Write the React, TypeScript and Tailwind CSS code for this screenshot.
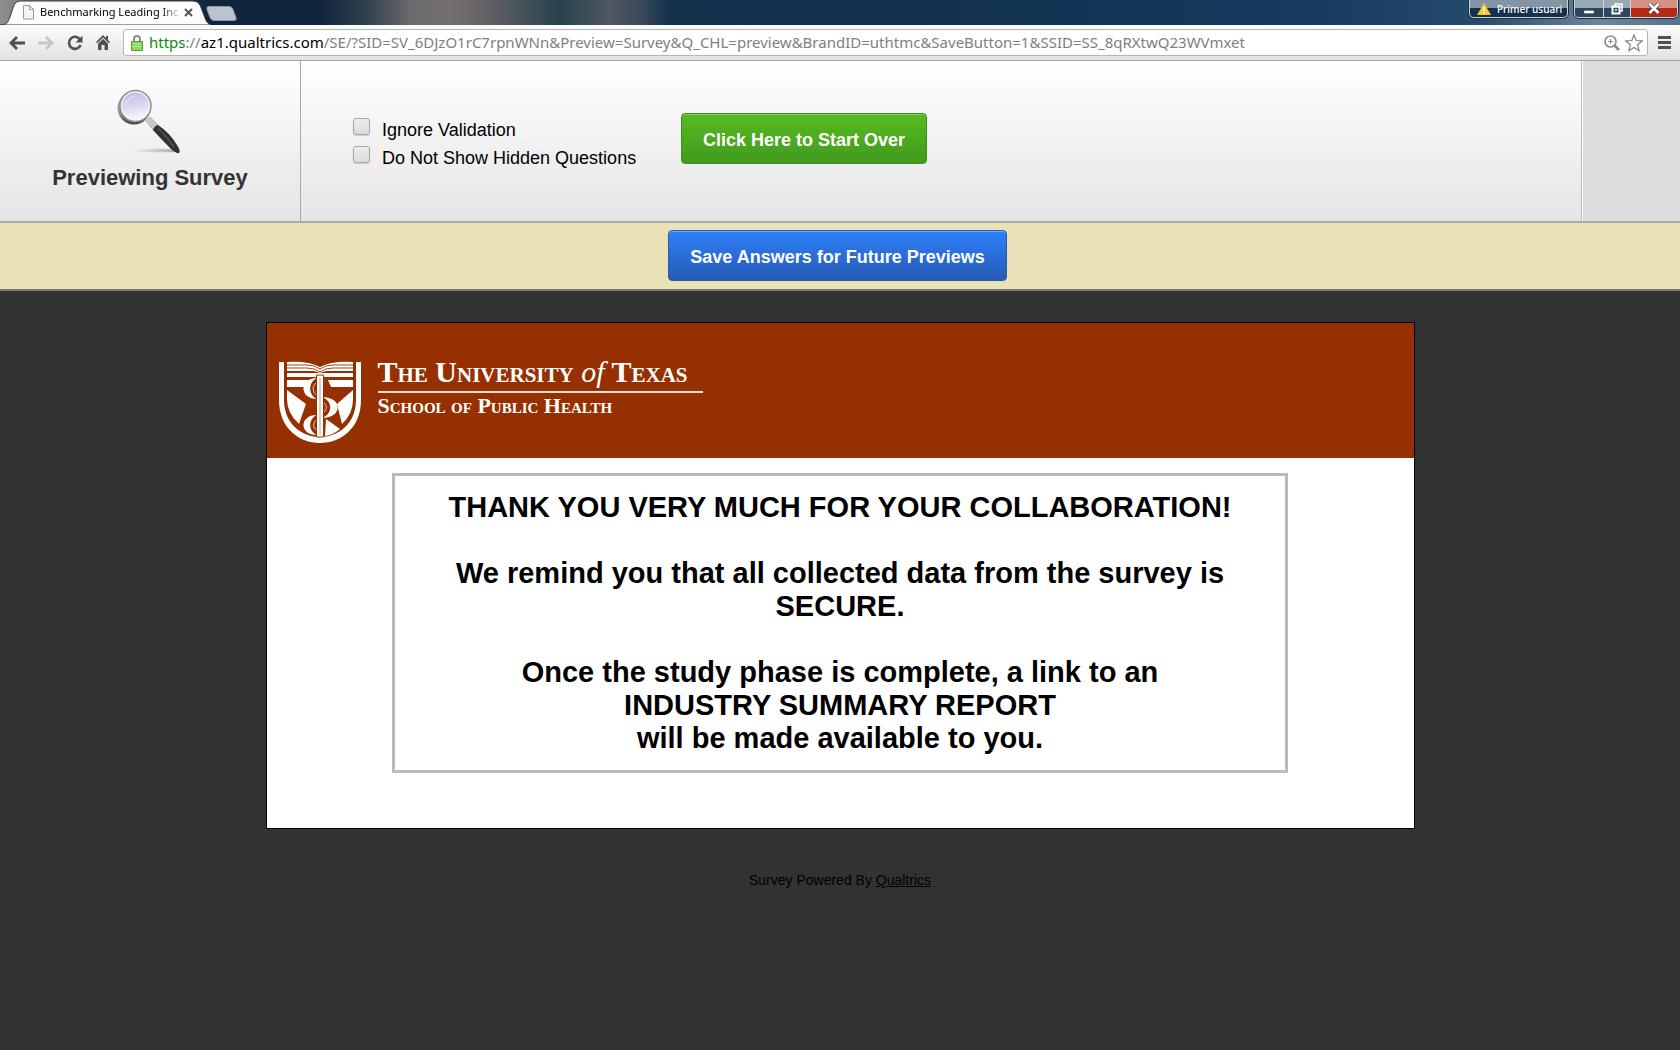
import React from "react";

const legacyButton =
  "h-[51px] rounded-[4px] border px-[21px] pt-[3px] font-['Liberation_Sans',sans-serif] text-[18px] font-bold text-white";

function TitleBar() {
  return (
    <div className="flex h-[25px] items-start justify-between bg-[linear-gradient(90deg,#8f8d90_0px,#777_30px,#10243c_210px,#10243c_320px,#34434f_370px,#6b6a6d_410px,#75706f_450px,#625f66_490px,#25434c_560px,#505762_610px,#3c4a5a_640px,#12304a_670px,#12304e_900px,#153a5e_1300px,#244a6c_1480px,#6d8699_1600px,#54728a_1680px)]">
      <div className="flex items-start">
        <div className="relative h-[25px] w-[211px]">
          <svg className="absolute inset-0" width="211" height="25" viewBox="0 0 211 25" aria-hidden="true">
            <path d="M0 25 C7 25 8 22 10 17 L14 5 Q16 1 20 1 H193 Q198 1 200 5 L205 18 Q207 25 213 25Z" fill="#fcfcfc" stroke="#33404d" strokeWidth="1" />
          </svg>
          <div className="relative flex h-[25px] items-center pl-[22px]">
            <svg width="13" height="15" viewBox="0 0 13 15" aria-hidden="true">
              <path d="M1.500 .5h6l4 4v9.500h-10zM7.500 .5v4h4" fill="#f4f4f4" stroke="#999" />
            </svg>
            <span className="ml-[5px] w-[138px] bg-gradient-to-r from-black from-85% to-[#ccc] bg-clip-text whitespace-nowrap font-['Noto_Sans',sans-serif] text-[11px] text-transparent">
              Benchmarking Leading Inc
            </span>
            <button aria-label="Close tab" className="ml-[6px]">
              <svg width="9" height="9" viewBox="0 0 9 9"><path d="M1 1l7 7M8 1l-7 7" stroke="#555" strokeWidth="2" /></svg>
            </button>
          </div>
        </div>
        <button aria-label="New tab" className="mt-[6px] -ml-[6px]">
          <svg width="32" height="15" viewBox="0 0 32 15"><path d="M4 .5h20q3 0 4 3l3 8q1 3-2 3H9q-3 0-4-3l-3-8q-1-3 2-3z" fill="#bac4ce" stroke="#8b98a5" /></svg>
        </button>
      </div>
      <div className="flex gap-[6px] pr-[2px] font-['Noto_Sans',sans-serif]">
        <button className="flex h-[18px] w-[99px] items-center gap-[6px] rounded-b-[5px] border border-t-0 border-[#c9d3dc] bg-gradient-to-b from-[#8395a5] from-45% to-[#15304a] to-50% pl-[7px] text-[10px] leading-[16px] font-medium whitespace-nowrap text-white shadow-[0_0_0_1px_#1b2f42]">
          <svg className="shrink-0" width="14" height="12" viewBox="0 0 14 12" aria-hidden="true"><path d="M7 0l7 12H0z" fill="#fcc62d" /><path d="M7 4v4M7 9v1.500" stroke="#fff" strokeWidth="1.500" /></svg>
          Primer usuari
        </button>
        <div className="flex h-[18px] overflow-hidden rounded-b-[5px] border border-t-0 border-[#c9d3dc] shadow-[0_0_0_1px_#1b2f42]">
          <button aria-label="Minimize" className="flex w-[29px] items-center justify-center border-r border-[#c9d3dc] bg-gradient-to-b from-[#98a8b5] from-45% to-[#2c465f] to-50%">
            <svg width="12" height="12" viewBox="0 0 12 12"><path d="M1 7.500h10v3H1z" fill="#fff" stroke="#555" strokeWidth=".5" /></svg>
          </button>
          <button aria-label="Restore" className="flex w-[27px] items-center justify-center border-r border-[#c9d3dc] bg-gradient-to-b from-[#98a8b5] from-45% to-[#2c465f] to-50%">
            <svg width="12" height="12" viewBox="0 0 12 12" fill="none" stroke="#fff" strokeWidth="1.500"><path d="M4 3V1h7v7H9" /><path d="M1.500 3.500h7v7h-7z" strokeWidth="2" /><path d="M4.500 6.500h1v1h-1z" strokeWidth="1" /></svg>
          </button>
          <button aria-label="Close" className="flex w-[46px] items-center justify-center bg-gradient-to-b from-[#d69084] from-45% to-[#b42a15] to-50%">
            <svg width="12" height="11" viewBox="0 0 12 11"><path d="M1.500 1l9 9M10.500 1l-9 9" stroke="#444" strokeWidth="4" /><path d="M1.500 1l9 9M10.500 1l-9 9" stroke="#fff" strokeWidth="2.500" /></svg>
          </button>
        </div>
      </div>
    </div>
  );
}

function NavBar() {
  return (
    <div className="flex h-[36px] items-center border-b border-[#a6a6a6] bg-gradient-to-b from-[#fcfcfc] to-[#e2e2e2] pr-[9px] pl-[9px]">
      <div className="flex w-[114px] items-center gap-[13px]">
        <button aria-label="Back"><svg width="16" height="14" viewBox="0 0 16 14"><path d="M8 1L2 7l6 6M2 7h14" fill="none" stroke="#505050" strokeWidth="2.800" /></svg></button>
        <button aria-label="Forward"><svg width="16" height="14" viewBox="0 0 16 14"><path d="M8 1l6 6-6 6M14 7H0" fill="none" stroke="#c6c6c6" strokeWidth="2.800" /></svg></button>
        <button aria-label="Reload"><svg width="16" height="16" viewBox="0 0 16 16"><path d="M13 4.500A6 6 0 1 0 13.600 10" fill="none" stroke="#505050" strokeWidth="2.600" /><path d="M15.500 .5v7h-7z" fill="#505050" /></svg></button>
        <button aria-label="Home"><svg width="14" height="15" viewBox="0 0 14 15"><path d="M7 0l7 7-1.200 1.200L7 2.500 1.200 8.200 0 7zM10 1h2v4l-2-2zM2 8.800l5-5 5 5V15H8.500v-5h-3v5H2z" fill="#505050" /></svg></button>
      </div>
      <div className="flex h-[27px] min-w-0 flex-1 items-center rounded-[3px] border border-[#b5b5b5] bg-white pr-[4px] pl-[7px]">
        <svg className="shrink-0" width="12" height="16" viewBox="0 0 12 16" aria-hidden="true">
          <path d="M3 8V4q0-3 3-3t3 3v4" fill="none" stroke="#8c8c8c" strokeWidth="2" />
          <path d="M.5 6.500h11v9H.5z" fill="#8cd65c" stroke="#5c9a3b" />
          <path d="M2 9h8M2 11.500h8" stroke="#b4ea90" />
        </svg>
        <div className="ml-[6px] min-w-0 flex-1 overflow-hidden whitespace-nowrap font-['Noto_Sans',sans-serif] text-[15px] text-[#808080]">
          <span className="text-[#0a8a0a]">https</span>://<span className="text-black">az1.qualtrics.com</span>
          /SE/?SID=SV_6DJzO1rC7rpnWNn&amp;Preview=Survey&amp;Q_CHL=preview&amp;BrandID=uthtmc&amp;SaveButton=1&amp;SSID=SS_8qRXtwQ23WVmxet
        </div>
        <button aria-label="Zoom"><svg width="16" height="16" viewBox="0 0 16 16" fill="none" stroke="#8a8a8a"><circle cx="6.500" cy="6.500" r="5.500" strokeWidth="1.600" /><path d="M4 6.500h5M6.500 4v5" /><path d="M10.500 10.500l4.500 4.500" strokeWidth="2.600" /></svg></button>
        <button aria-label="Bookmark" className="ml-[5px]"><svg width="18" height="18" viewBox="0 0 18 18"><path d="M9 1l2.200 5.500 6 .4-4.600 3.900 1.500 5.900L9 13.500l-5.100 3.200 1.500-5.900L.8 6.900l6-.4z" fill="#fff" stroke="#808080" strokeWidth="1.200" /></svg></button>
      </div>
      <button aria-label="Menu" className="ml-[10px]"><svg width="13" height="13" viewBox="0 0 13 13"><path d="M0 1.500h13M0 6.500h13M0 11.500h13" stroke="#505050" strokeWidth="3" /></svg></button>
    </div>
  );
}

function Magnifier() {
  return (
    <svg width="66" height="66" viewBox="0 0 66 66" aria-hidden="true">
      <defs>
        <linearGradient id="rim" x1="0" y1="0" x2="0" y2="1"><stop offset="0" stopColor="#a5a5a5" /><stop offset=".6" stopColor="#999" /><stop offset="1" stopColor="#444" /></linearGradient>
        <linearGradient id="lens" x1=".4" y1="0" x2=".6" y2="1"><stop offset="0" stopColor="#c0bce6" /><stop offset=".5" stopColor="#dad8f2" /><stop offset="1" stopColor="#fbfbff" /></linearGradient>
        <linearGradient id="ground"><stop offset="0" stopColor="#888" stopOpacity="0" /><stop offset="1" stopColor="#777" stopOpacity=".6" /></linearGradient>
      </defs>
      <path d="M12 62q25-4 48-1l3 2q-30 1-51-1z" fill="url(#ground)" />
      <path d="M29 32l4-4 9 9-5 5z" fill="#c8c8c8" stroke="#999" strokeWidth=".6" />
      <path d="M36 41q1-4 5-5 12 8 19 20 4 6 2 8-3 1-9-5-9-9-17-18z" fill="#323232" />
      <path d="M41 39q9 9 16 19" fill="none" stroke="#555" strokeWidth="1.500" />
      <circle cx="17" cy="19" r="16.500" fill="url(#rim)" />
      <circle cx="18.500" cy="17" r="15.500" fill="#f4f4f4" stroke="#8d8d8d" strokeWidth="1.500" />
      <circle cx="18.500" cy="17" r="13.500" fill="url(#lens)" />
      <path d="M7 18q2-10 13-12-11 5-13 12z" fill="#fff" opacity=".7" />
    </svg>
  );
}

function PreviewOption({ id, label }: { id: string; label: string }) {
  return (
    <div className="flex h-[28px] items-start">
      <input id={id} type="checkbox" className="mt-[3px] h-[17px] w-[17px] appearance-none rounded-[3px] border border-[#a5a5a5] bg-gradient-to-b from-[#ececec] to-[#dcdcdc] shadow-[0_1px_1px_#ccc]" />
      <label htmlFor={id} className="ml-[12px] pt-[3px] text-[18px] leading-[24px] whitespace-nowrap text-black">{label}</label>
    </div>
  );
}

function Shield() {
  return (
    <svg className="shrink-0" width="82" height="82" viewBox="0 0 82 82" aria-hidden="true">
      <path d="M0 1h5v38c0 24 18 37 36 37s36-13 36-37V1h5v38c0 28-20 43-41 43S0 67 0 39z" fill="#fff" />
      <path d="M8 1q22-1 33 5Q52 0 74 1v9H47l-6 2-6-2H8z" fill="#fff" />
      <path d="M8 4h20q8 0 13 4 5-4 13-4h20M8 7h20q8 0 13 4 5-4 13-4h20" fill="none" stroke="#963000" strokeWidth=".9" />
      <path d="M8 12h66v4H8zM8 19h23q-4 3-5 7H8zM49 19h25v7H52zM8 29l19 14-7 20Q8 52 8 38zM74 29v9q0 15-11 25l-5-20zM47 58l14 10q-7 6-15 7z" fill="#fff" />
      <path d="M38 17C20 17 20 38 38 38 29 34 29 21 38 17zM43 36c21 0 21 21 0 21 11-4 11-17 0-21zM38 54c-18 0-18 20 0 20-9-4-9-16 0-20z" fill="#fff" />
      <path d="M38 21q-8 6 0 14M44 41q7 5 0 11M38 58q-7 6 0 12" fill="none" stroke="#e2c5b5" strokeWidth="1" />
      <path d="M37.500 14h7v62h-7z" fill="#fff" stroke="#963000" strokeWidth="1" />
      <path d="M41 17v57" stroke="#c99b83" strokeWidth="1" />
    </svg>
  );
}

export default function App() {
  return (
    <div className="flex min-h-screen flex-col bg-[#323232] font-['Liberation_Sans',Arial,sans-serif]">
      <header>
        <TitleBar />
        <NavBar />
      </header>
      <section className="flex h-[160px] bg-gradient-to-b from-white to-[#e5e5e5]">
        <div className="flex w-[301px] shrink-0 flex-col items-center border-r border-[#a8a8ab] pt-[28px]">
          <Magnifier />
          <h1 className="mt-[9px] text-[22px] leading-[28px] font-bold text-[#333]">Previewing Survey</h1>
        </div>
        <div className="flex flex-1 items-start border-r border-[#bdbdbd] pl-[52px]">
          <div className="w-[328px] pt-[54px]">
            <PreviewOption id="ignore" label="Ignore Validation" />
            <PreviewOption id="hidden" label="Do Not Show Hidden Questions" />
          </div>
          <button className={legacyButton + " mt-[52px] border-[#3f8f1c] bg-gradient-to-b from-[#56bb1f] to-[#429a1f] shadow-[inset_0_1px_0_#84d058]"}>Click Here to Start Over</button>
        </div>
        <div className="w-[98px] border-l border-white bg-[#ddd]" />
      </section>
      <section className="flex h-[70px] items-start justify-center border-t-2 border-b-2 border-t-[#ababae] border-b-[#77777a] bg-[#e9e2b7] pt-[7px] pr-[5px]">
        <button className={legacyButton + " border-[#2a5caa] bg-gradient-to-b from-[#2e80fc] to-[#265bb5] shadow-[inset_0_1px_0_#72a8fb]"}>Save Answers for Future Previews</button>
      </section>
      <main className="mx-auto mt-[31px] w-full max-w-[1149px] border border-black bg-white pb-[55px]">
        <div className="flex h-[135px] items-start bg-[#963000] pt-[38px] pl-[12px] text-white">
          <Shield />
          <div className="ml-[17px] w-[325px] font-['Liberation_Serif',serif] font-bold whitespace-nowrap">
            <p className="-mt-[4px] text-[30px] leading-[29px] [font-variant:small-caps]">
              The University <i className="font-normal [font-variant:normal]">of</i> Texas
            </p>
            <div className="mt-[5px] h-[2px] bg-[#f0dfd6]" />
            <p className="mt-[1px] text-[22px] leading-[24px] [font-variant:small-caps]">School of Public Health</p>
          </div>
        </div>
        <div className="mx-auto mt-[15px] max-w-[896px] border-[3px] border-[#bababa] py-[15px] text-center text-[29px] leading-[33px] font-bold text-black">
          <p>THANK YOU VERY MUCH FOR YOUR COLLABORATION!</p>
          <p className="mt-[33px]">We remind you that all collected data from the survey is<br />SECURE.</p>
          <p className="mt-[33px]">Once the study phase is complete, a link to an<br />INDUSTRY SUMMARY REPORT<br />will be made available to you.</p>
        </div>
      </main>
      <footer className="mt-[42px] text-center text-[14px] leading-[18px] text-black">
        Survey Powered By <a href="#" className="underline">Qualtrics</a>
      </footer>
    </div>
  );
}
